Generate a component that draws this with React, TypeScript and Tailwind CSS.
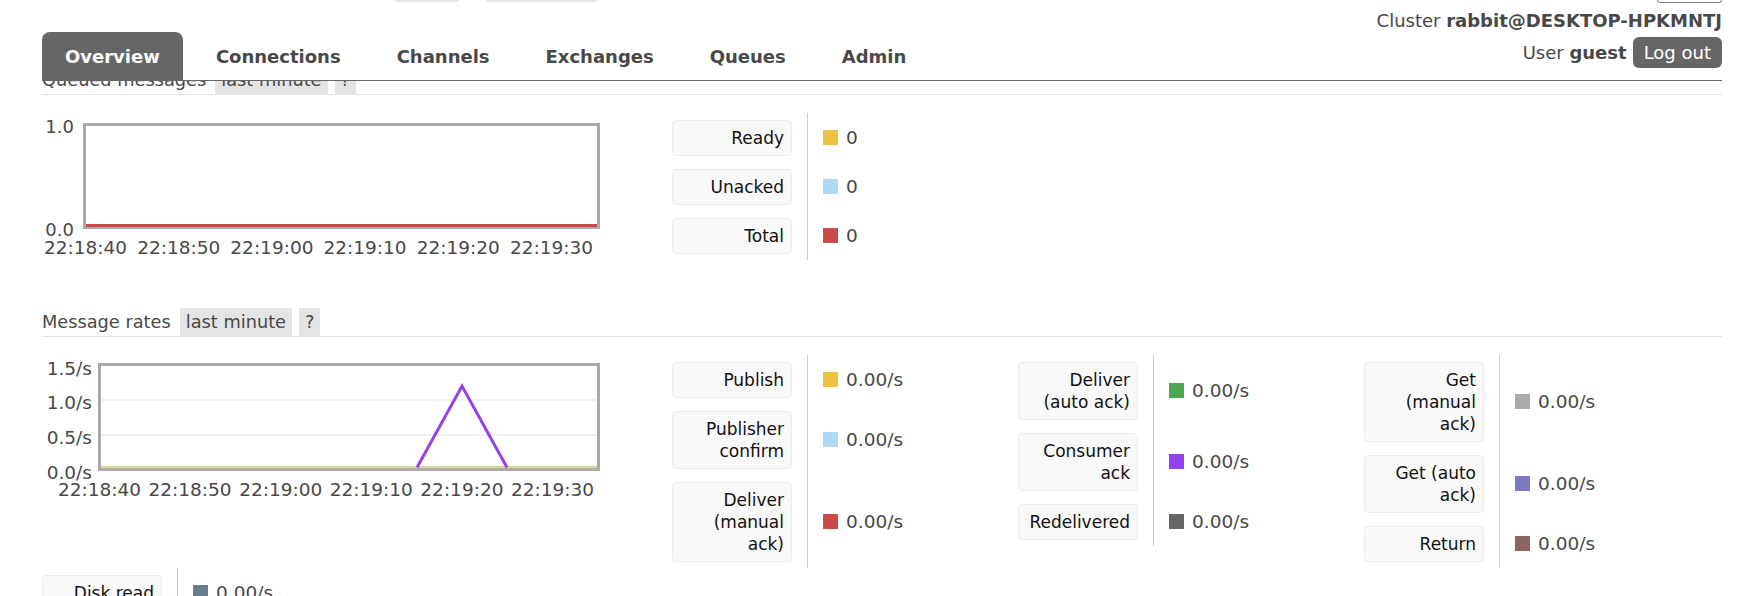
import React from "react";

type Row = { label: React.ReactNode; swatch: string; value: string };

function Legend({ rows }: { rows: Row[] }) {
  return (
    <div className="flex w-[346px] shrink-0 flex-col">
      {rows.map((r, i) => (
        <div key={i} className="flex">
          <div className="w-[135px] shrink-0 py-[6.5px]">
            <div className="w-[120px] rounded-[4px] border border-[#ececec] bg-[#f9f9f9] py-[6px] pr-[7px] text-right text-[17px] leading-[22px] text-[#111]">
              {r.label}
            </div>
          </div>
          <div className="flex flex-1 items-center gap-[8px] border-l border-[#cccccc] pl-[15px] text-[18.5px] text-[#484848]">
            <span className={"h-[15px] w-[15px] shrink-0 " + r.swatch} />
            <span>{r.value}</span>
          </div>
        </div>
      ))}
    </div>
  );
}

function Heading({ title }: { title: string }) {
  return (
    <div className="flex h-[29px] items-end border-b border-[#e2e2e2] text-[17.75px] text-[#484848]">
      <span className="flex h-[28px] items-center">{title}</span>
      <span className="ml-[9px] flex h-[28px] items-center bg-[#e4e4e4] px-[6px]">last minute</span>
      <span className="ml-[7px] flex h-[28px] items-center bg-[#e4e4e4] px-[6px]">?</span>
    </div>
  );
}

const times = ["22:18:40", "22:18:50", "22:19:00", "22:19:10", "22:19:20", "22:19:30"];

function QueuedChart() {
  return (
    <svg width="630" height="150" className="shrink-0" style={{ fontFamily: "'DejaVu Sans', sans-serif" }}>
      <rect x="42.5" y="11.5" width="514" height="103" fill="#fff" stroke="#a9a9a9" strokeWidth="3" />
      <line x1="44" y1="112.5" x2="555" y2="112.5" stroke="#cb4b4b" strokeWidth="3" />
      <g fontSize="18" fill="#484848" textAnchor="end" dominantBaseline="central">
        <text x="32" y="13">1.0</text>
        <text x="32" y="116">0.0</text>
      </g>
      <g fontSize="18.5" fill="#484848" textAnchor="middle" dominantBaseline="central">
        {times.map((t, k) => (
          <text key={t} x={43.5 + k * 93.2} y="134">
            {t}
          </text>
        ))}
      </g>
    </svg>
  );
}

function RatesChart() {
  return (
    <svg width="630" height="150" className="shrink-0" style={{ fontFamily: "'DejaVu Sans', sans-serif" }}>
      <rect x="57.5" y="9.5" width="499" height="105" fill="#fff" stroke="#a9a9a9" strokeWidth="3" />
      <line x1="59" y1="45" x2="555" y2="45" stroke="#ebebeb" strokeWidth="1.5" />
      <line x1="59" y1="80" x2="555" y2="80" stroke="#ebebeb" strokeWidth="1.5" />
      <line x1="59" y1="112" x2="555" y2="112" stroke="#d9d59c" strokeWidth="2.5" />
      <polyline points="375,112.5 420,31 465,112.5" fill="none" stroke="#9440ed" strokeWidth="3" />
      <g fontSize="18.5" fill="#484848" textAnchor="end" dominantBaseline="central">
        <text x="50" y="13">1.5/s</text>
        <text x="50" y="47">1.0/s</text>
        <text x="50" y="82">0.5/s</text>
        <text x="50" y="117">0.0/s</text>
      </g>
      <g fontSize="18.5" fill="#484848" textAnchor="middle" dominantBaseline="central">
        {times.map((t, k) => (
          <text key={t} x={57.5 + k * 90.6} y="134">
            {t}
          </text>
        ))}
      </g>
    </svg>
  );
}

export default function App() {
  const tabs = ["Overview", "Connections", "Channels", "Exchanges", "Queues", "Admin"];
  return (
    <div className="relative h-[596px] w-[1743px] overflow-hidden bg-white font-['DejaVu_Sans',sans-serif] text-[#484848]">
      <header className="absolute inset-x-0 top-0 z-10 bg-white">
        <div className="ml-[42px] mr-[21px] flex flex-col">
          <div className="flex h-[3px] items-start">
            <span className="ml-[353px] h-[2px] w-[64px] rounded-b-[2px] border-b-2 border-[#e6e6e6]" />
            <span className="ml-[27px] h-[2px] w-[111px] rounded-b-[2px] border-b-2 border-[#e6e6e6]" />
            <span className="ml-auto h-[3px] w-[65px] rounded-b-[3px] border-x border-b border-[#8a8a8a]" />
          </div>
          <div className="flex h-[78px] items-end justify-between border-b border-[#666666]">
            <ul className="flex gap-[10px]">
              {tabs.map((t, i) => (
                <li
                  key={t}
                  className={
                    "flex h-[48px] items-center rounded-t-[8px] px-[23px] text-[18px] font-bold " +
                    (i === 0 ? "bg-[#666666] text-white" : "text-[#484848]")
                  }
                >
                  {t}
                </li>
              ))}
            </ul>
            <div className="mb-[12px] flex flex-col items-end text-[18px]">
              <div className="leading-[22px]">
                Cluster <b>rabbit@DESKTOP-HPKMNTJ</b>
              </div>
              <div className="mt-[5px] flex items-center gap-[6px]">
                <span>
                  User <b>guest</b>
                </span>
                <span className="flex h-[31px] items-center rounded-[6px] bg-[#666666] px-[11px] text-white">Log out</span>
              </div>
            </div>
          </div>
        </div>
      </header>

      <main className="ml-[42px] mr-[21px] pt-[66px]">
        <Heading title="Queued messages" />
        <div className="mt-[18px] flex items-start">
          <QueuedChart />
          <Legend
            rows={[
              { label: "Ready", swatch: "bg-[#edc240]", value: "0" },
              { label: "Unacked", swatch: "bg-[#afd8f8]", value: "0" },
              { label: "Total", swatch: "bg-[#cb4b4b]", value: "0" },
            ]}
          />
        </div>

        <div className="mt-[45px]">
          <Heading title="Message rates" />
        </div>
        <div className="mt-[18px] flex items-start">
          <RatesChart />
          <Legend
            rows={[
              { label: "Publish", swatch: "bg-[#edc240]", value: "0.00/s" },
              { label: <>Publisher<br />confirm</>, swatch: "bg-[#afd8f8]", value: "0.00/s" },
              { label: <>Deliver<br />(manual<br />ack)</>, swatch: "bg-[#cb4b4b]", value: "0.00/s" },
            ]}
          />
          <Legend
            rows={[
              { label: <>Deliver<br />(auto ack)</>, swatch: "bg-[#4da74d]", value: "0.00/s" },
              { label: <>Consumer<br />ack</>, swatch: "bg-[#9440ed]", value: "0.00/s" },
              { label: "Redelivered", swatch: "bg-[#666666]", value: "0.00/s" },
            ]}
          />
          <Legend
            rows={[
              { label: <>Get<br />(manual<br />ack)</>, swatch: "bg-[#aaaaaa]", value: "0.00/s" },
              { label: <>Get (auto<br />ack)</>, swatch: "bg-[#7c79c3]", value: "0.00/s" },
              { label: "Return", swatch: "bg-[#8d6663]", value: "0.00/s" },
            ]}
          />
        </div>
        <div className="flex">
          <Legend
            rows={[
              { label: "Disk read", swatch: "bg-[#687e8c]", value: "0.00/s" },
              { label: "Disk write", swatch: "bg-[#8c9ba5]", value: "0.00/s" },
            ]}
          />
        </div>
      </main>
    </div>
  );
}
